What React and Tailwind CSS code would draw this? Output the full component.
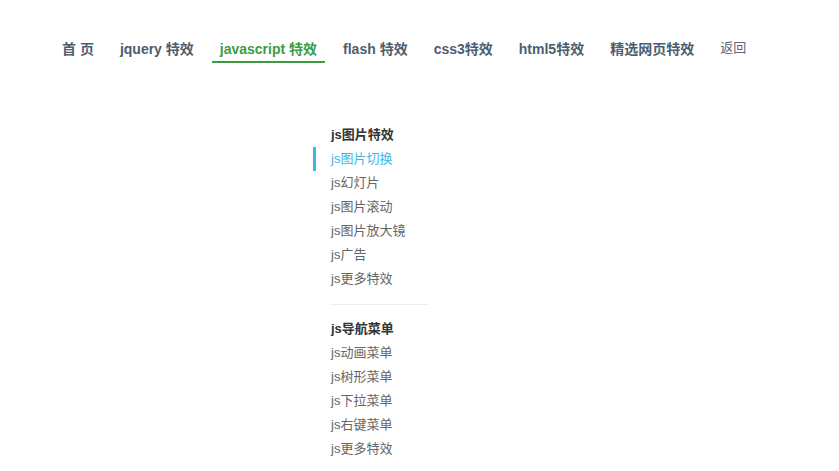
import React from 'react';

const navItems = [
  { label: '首 页' },
  { label: 'jquery 特效' },
  { label: 'javascript 特效', active: true },
  { label: 'flash 特效' },
  { label: 'css3特效' },
  { label: 'html5特效' },
  { label: '精选网页特效' },
];

const groups = [
  {
    title: 'js图片特效',
    items: ['js图片切换', 'js幻灯片', 'js图片滚动', 'js图片放大镜', 'js广告', 'js更多特效'],
    active: 'js图片切换',
  },
  {
    title: 'js导航菜单',
    items: ['js动画菜单', 'js树形菜单', 'js下拉菜单', 'js右键菜单', 'js更多特效'],
  },
];

const App = () => {
  return (
    <div
      className="w-[839px] h-[471px] overflow-hidden bg-white"
      style={{ fontFamily: '"Liberation Sans", "Noto Sans CJK SC", sans-serif' }}
    >
      {/* top nav */}
      <div className="flex items-end pl-[54px] pt-[34px] gap-[10px]">
        {navItems.map((item) => (
          <a
            key={item.label}
            className={`px-2 h-[29px] leading-[30px] text-[14px] font-bold border-b-2 ${
              item.active ? 'text-[#3c9c40] border-[#3c9c40]' : 'text-[#4d5d70] border-transparent'
            }`}
          >
            {item.label}
          </a>
        ))}
        <a className="px-2 h-[29px] leading-[28px] text-[13px] text-[#5c6878]">返回</a>
      </div>

      {/* side menu */}
      <div className="ml-[313px] mt-[60px] w-[116px]">
        {groups.map((g, gi) => (
          <div key={g.title}>
            {gi > 0 && <div className="ml-[17px] h-px bg-[#eeeeee] mt-[13px] mb-[12px]" />}
            <div className="pl-[18px] h-[24px] leading-[24px] text-[13px] font-bold text-[#333]">
              {g.title}
            </div>
            {g.items.map((it) => (
              <div
                key={it}
                className={`pl-[15px] h-[24px] leading-[24px] text-[13px] border-l-[3px] ${
                  it === g.active ? 'border-[#3cb8e6] text-[#3cb8e6]' : 'border-transparent text-[#666]'
                }`}
              >
                {it}
              </div>
            ))}
          </div>
        ))}
      </div>
    </div>
  );
};

export default App;
